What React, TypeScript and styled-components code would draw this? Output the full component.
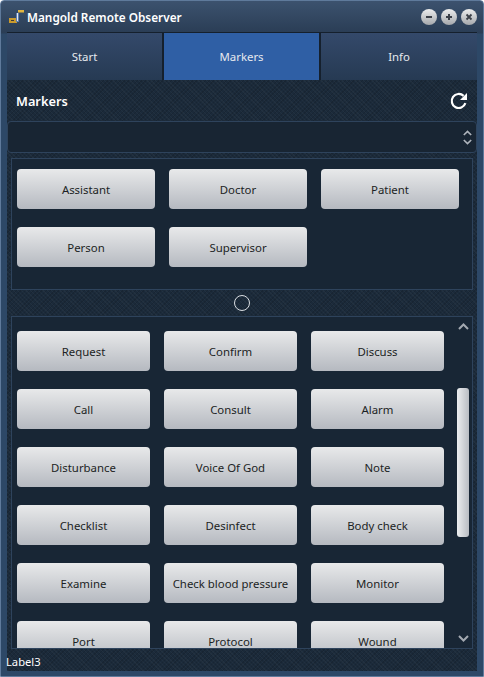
import styled, { createGlobalStyle } from "styled-components";

const GlobalStyle = createGlobalStyle`
  html, body {
    margin: 0;
    padding: 0;
    background: #ffffff;
  }
`;

const texture = `
  background-color: #1b2a3a;
  background-image:
    repeating-linear-gradient(45deg, rgba(255,255,255,0.03) 0 1px, transparent 1px 3px),
    repeating-linear-gradient(-45deg, rgba(0,0,0,0.12) 0 1px, transparent 1px 3px);
`;

const Frame = styled.div`
  width: 484px;
  height: 677px;
  box-sizing: border-box;
  display: flex;
  flex-direction: column;
  padding: 1px 6px 5px;
  border: 1px solid #5f7a9b;
  border-radius: 4px 4px 0 0;
  background: linear-gradient(#3c526e 0, #2a3d55 32px, #2d4867 33px, #2d4867 100%);
  font-family: "Noto Sans", "Open Sans", sans-serif;
  overflow: hidden;
`;

const TitleBar = styled.div`
  height: 30px;
  flex: none;
  display: flex;
  align-items: center;
  padding-left: 2px;
  gap: 2px;
`;

const AppTitle = styled.div`
  flex: 1;
  color: #ffffff;
  font-size: 11.8px;
  font-weight: 600;
`;

const WindowButtons = styled.div`
  display: flex;
  gap: 4px;
  margin-top: -1px;
`;

const WindowButton = styled.div`
  width: 16px;
  height: 16px;
  border-radius: 50%;
  background: linear-gradient(#eceded, #a5a8ac);
  display: flex;
  align-items: center;
  justify-content: center;
`;

const Tabs = styled.div`
  height: 48px;
  flex: none;
  display: grid;
  grid-template-columns: 155px 155px 156px;
  gap: 2px;
  background: #15202d;
  border-top: 1px solid #15202d;
  box-sizing: border-box;
`;

const Tab = styled.div<{ $active?: boolean }>`
  display: flex;
  align-items: center;
  justify-content: center;
  color: #e6e9ee;
  font-size: 11.4px;
  background: ${(p) => (p.$active ? "#2f5fa5" : "linear-gradient(#34496a, #263a53)")};
`;

const Content = styled.div`
  flex: 1;
  min-height: 0;
  display: flex;
  flex-direction: column;
  ${texture}
`;

const Header = styled.div`
  height: 41px;
  flex: none;
  display: flex;
  align-items: center;
  justify-content: space-between;
  padding: 0 9px 0 9px;
  box-sizing: border-box;
  color: #ffffff;
  font-size: 12.8px;
  font-weight: 600;
`;

const SelectBox = styled.div`
  height: 32px;
  flex: none;
  box-sizing: border-box;
  border: 1px solid #2e435c;
  border-radius: 4px;
  background: #182533;
  display: flex;
  align-items: center;
  justify-content: flex-end;
  padding-right: 3px;
`;

const Panel = styled.div`
  margin: 5px 4px 0;
  border: 1px solid #2e435c;
  background: #182635;
  box-sizing: border-box;
  flex: none;
`;

const TopPanel = styled(Panel)`
  height: 132px;
  padding: 10px 13px 0 5px;
  display: grid;
  grid-template-columns: repeat(3, 138px);
  grid-auto-rows: 40px;
  column-gap: 14px;
  row-gap: 18px;
`;

const Splitter = styled.div`
  height: 26px;
  flex: none;
  display: flex;
  align-items: center;
  justify-content: center;
`;

const SplitterDot = styled.div`
  width: 16px;
  height: 16px;
  box-sizing: border-box;
  border: 1.5px solid #d9dde2;
  border-radius: 50%;
`;

const BottomPanel = styled(Panel)`
  margin-top: 0;
  height: 333px;
  display: flex;
  overflow: hidden;
`;

const MarkerGrid = styled.div`
  flex: 1;
  padding: 14px 0 0 5px;
  display: grid;
  grid-template-columns: repeat(3, 133px);
  grid-auto-rows: 40px;
  column-gap: 14px;
  row-gap: 18px;
`;

const MarkerButton = styled.div`
  border-radius: 4px;
  background: linear-gradient(#e8e9ea, #b5b9c0);
  display: flex;
  align-items: center;
  justify-content: center;
  color: #1c1f24;
  font-size: 11.4px;
`;

const ScrollColumn = styled.div`
  width: 16px;
  flex: none;
  display: flex;
  flex-direction: column;
  align-items: center;
  padding: 6px 1px 0 0;
`;

const ScrollThumb = styled.div`
  width: 12px;
  height: 149px;
  flex: none;
  border-radius: 3px;
  background: linear-gradient(90deg, #eceef0, #b9bdc3);
  margin: 58px 0 98px;
`;

const StatusLabel = styled.div`
  flex: 1;
  display: flex;
  align-items: center;
  color: #ffffff;
  font-size: 11.2px;
  padding: 3px 0 0 0;
  margin-left: -1px;
`;

const AppIcon = () => (
  <svg width="16" height="14" viewBox="0 0 16 14">
    <path d="M0 8h8v5H0z" fill="#c99a2e" />
    <path d="M2 10h3v1H2z" fill="#3a3a3a" />
    <path d="M7 3h3v9H7z" fill="#5f7fb0" />
    <path d="M8 3h1v8H8z" fill="#e6e8ec" />
    <path d="M9 0h6v2.5H9z" fill="#e3b63f" />
  </svg>
);

const RefreshIcon = () => (
  <svg width="18" height="18" viewBox="0 0 18 18" fill="none">
    <path d="M15.4 11.2A7 7 0 1 1 13.6 3.9" stroke="#fff" strokeWidth="2.2" />
    <path d="M17 1v7h-7z" fill="#fff" />
  </svg>
);

const Chevron = ({ up, color }: { up?: boolean; color: string }) => (
  <svg width="11" height="7" viewBox="0 0 11 7" fill="none">
    <path d={up ? "M1 6l4.5-4.5L10 6" : "M1 1l4.5 4.5L10 1"} stroke={color} strokeWidth="2" />
  </svg>
);

const SelectArrows = styled.div`
  display: flex;
  flex-direction: column;
  gap: 3px;
  width: 11px;
  svg {
    width: 9px;
    height: 6px;
    display: block;
    margin: 0 auto;
  }
`;

const topMarkers = ["Assistant", "Doctor", "Patient", "Person", "Supervisor"];
const markers = [
  "Request", "Confirm", "Discuss",
  "Call", "Consult", "Alarm",
  "Disturbance", "Voice Of God", "Note",
  "Checklist", "Desinfect", "Body check",
  "Examine", "Check blood pressure", "Monitor",
  "Port", "Protocol", "Wound",
];

export default function App() {
  return (
    <>
      <GlobalStyle />
      <Frame>
        <TitleBar>
          <AppIcon />
          <AppTitle>Mangold Remote Observer</AppTitle>
          <WindowButtons>
            <WindowButton>
              <svg width="8" height="8" viewBox="0 0 8 8"><path d="M1 3h6v2H1z" fill="#3a3f47" /></svg>
            </WindowButton>
            <WindowButton>
              <svg width="8" height="8" viewBox="0 0 8 8"><path d="M3 1h2v2h2v2H5v2H3V5H1V3h2z" fill="#3a3f47" /></svg>
            </WindowButton>
            <WindowButton>
              <svg width="8" height="8" viewBox="0 0 8 8"><path d="M1.5 1.5l5 5M6.5 1.5l-5 5" stroke="#3a3f47" strokeWidth="1.8" /></svg>
            </WindowButton>
          </WindowButtons>
        </TitleBar>
        <Tabs>
          <Tab>Start</Tab>
          <Tab $active>Markers</Tab>
          <Tab>Info</Tab>
        </Tabs>
        <Content>
          <Header>
            <span>Markers</span>
            <RefreshIcon />
          </Header>
          <SelectBox>
            <SelectArrows>
              <Chevron up color="#aeb4bc" />
              <Chevron color="#aeb4bc" />
            </SelectArrows>
          </SelectBox>
          <TopPanel>
            {topMarkers.map((m) => (
              <MarkerButton key={m}>{m}</MarkerButton>
            ))}
          </TopPanel>
          <Splitter>
            <SplitterDot />
          </Splitter>
          <BottomPanel>
            <MarkerGrid>
              {markers.map((m) => (
                <MarkerButton key={m}>{m}</MarkerButton>
              ))}
            </MarkerGrid>
            <ScrollColumn>
              <Chevron up color="#a3a9b1" />
              <ScrollThumb />
              <Chevron color="#a3a9b1" />
            </ScrollColumn>
          </BottomPanel>
          <StatusLabel>Label3</StatusLabel>
        </Content>
      </Frame>
    </>
  );
}
